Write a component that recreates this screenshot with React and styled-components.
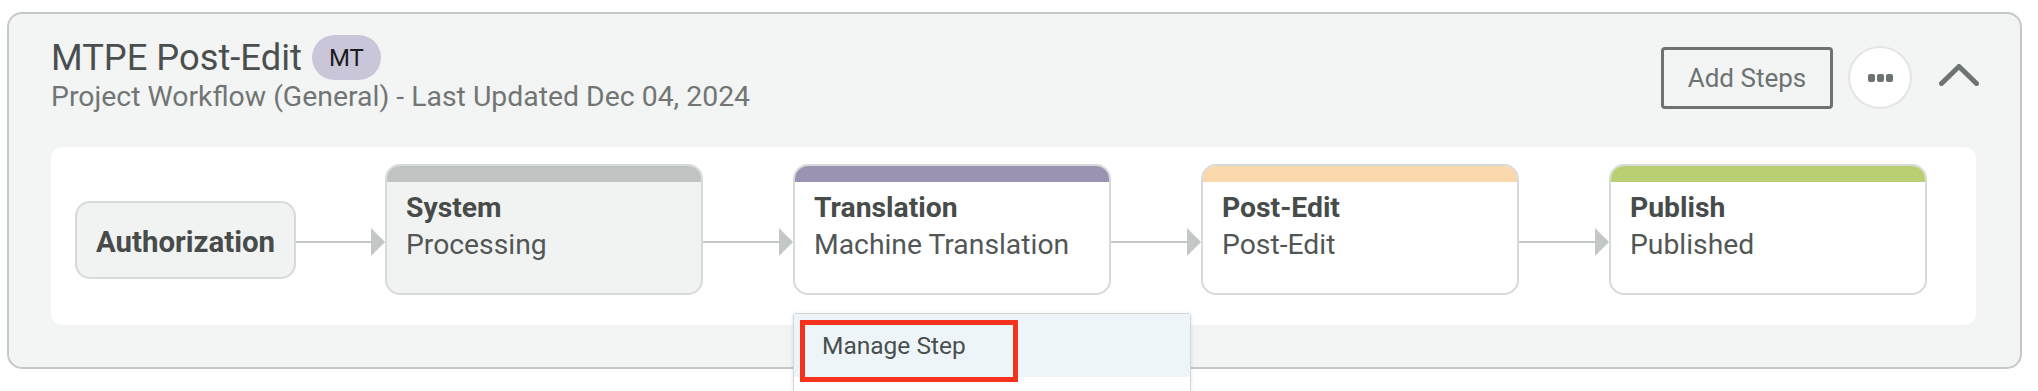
import React from "react";
import styled, { createGlobalStyle } from "styled-components";

const GlobalStyle = createGlobalStyle`
  html, body {
    margin: 0;
    padding: 0;
    background: #ffffff;
    overflow: hidden;
  }
  body {
    font-family: Roboto, "Liberation Sans", Arial, sans-serif;
  }
  * { box-sizing: border-box; }
`;

const Page = styled.div`
  min-height: 391px;
  padding: 12px 16px 0 7px;
`;

const Card = styled.section`
  background: #f3f4f4;
  border: 2px solid #c5cac9;
  border-radius: 15px;
  padding: 21px 44px 42px 42px;
`;

const Header = styled.div`
  display: flex;
  justify-content: space-between;
  align-items: flex-start;
`;

const TitleBlock = styled.div`
  display: flex;
  flex-direction: column;
`;

const TitleRow = styled.div`
  display: flex;
  align-items: center;
  gap: 10px;
  height: 45px;
`;

const Title = styled.h1`
  margin: 0;
  font-size: 36.3px;
  font-weight: 400;
  line-height: 45px;
  color: #4a4f4e;
`;

const Badge = styled.span`
  display: inline-flex;
  align-items: center;
  justify-content: center;
  height: 45px;
  width: 69px;
  border-radius: 23px;
  background: #c9c6d9;
  color: #1c1c1c;
  font-size: 24px;
`;

const Subtitle = styled.div`
  margin-top: 1px;
  font-size: 28.4px;
  line-height: 32px;
  color: #717675;
`;

const Actions = styled.div`
  display: flex;
  align-items: center;
  margin-top: 11px;
`;

const AddButton = styled.button`
  width: 172px;
  height: 62px;
  border: 3px solid #6d7272;
  border-radius: 4px;
  background: transparent;
  color: #6d7272;
  font-family: inherit;
  font-size: 26px;
  padding: 0;
  cursor: pointer;
`;

const MoreButton = styled.button`
  margin-left: 15px;
  width: 64px;
  height: 63px;
  border-radius: 50%;
  border: 2px solid #e3e5e4;
  background: #ffffff;
  display: flex;
  align-items: center;
  justify-content: center;
  gap: 2px;
  padding: 0;
  cursor: pointer;
`;

const Dot = styled.span`
  width: 7px;
  height: 8px;
  border-radius: 2px;
  background: #6d7272;
`;

const Collapse = styled.button`
  margin-left: 27px;
  margin-right: -3px;
  margin-bottom: 6px;
  background: none;
  border: none;
  padding: 0;
  display: flex;
  cursor: pointer;
`;

const Panel = styled.div`
  margin-top: 34px;
  background: #ffffff;
  border-radius: 12px;
  padding: 17px 24px 30px;
  display: flex;
  align-items: flex-start;
`;

const AuthNode = styled.div`
  margin-top: 37px;
  width: 221px;
  height: 78px;
  flex: none;
  border: 2px solid #d7dad9;
  border-radius: 15px;
  background: #f1f3f2;
  display: flex;
  align-items: center;
  justify-content: center;
  padding-top: 4px;
  font-size: 29.4px;
  font-weight: 700;
  color: #474c4b;
`;

const Connector = styled.div`
  margin-top: 64px;
  width: ${(p) => p.$width}px;
  height: 28px;
  flex: none;
  display: flex;
  align-items: center;
`;

const Line = styled.div`
  flex: 1;
  height: 2px;
  background: #c3c8c7;
`;

const Arrow = styled.div`
  width: 0;
  height: 0;
  border-top: 14px solid transparent;
  border-bottom: 14px solid transparent;
  border-left: 14px solid #c3c8c7;
`;

const StepWrap = styled.div`
  position: relative;
  flex: none;
`;

const StepCard = styled.div`
  width: 318px;
  height: 131px;
  border: 2px solid #d7dad9;
  border-radius: 15px;
  overflow: hidden;
  background: ${(p) => (p.$muted ? "#f1f3f2" : "#ffffff")};
`;

const StepBar = styled.div`
  height: 16px;
  background: ${(p) => p.$color};
`;

const StepBody = styled.div`
  padding: 7px 18px 0 19px;
  font-size: 28.3px;
  line-height: 37px;
`;

const StepType = styled.div`
  font-weight: 700;
  color: #474c4b;
`;

const StepName = styled.div`
  color: #525756;
  white-space: nowrap;
`;

const Menu = styled.div`
  position: absolute;
  left: 0;
  top: 149px;
  width: 398px;
  height: 78px;
  background: #ffffff;
  border: 1px solid #d3d7d6;
  border-bottom: none;
  border-radius: 3px 3px 0 0;
  box-shadow: 0 1px 4px rgba(0, 0, 0, 0.12);
  z-index: 2;
`;

const MenuItem = styled.div`
  height: 63px;
  display: flex;
  align-items: center;
  padding-left: 28px;
  background: #eef5f8;
  font-size: 24.5px;
  color: #4a4f4e;
`;

const Highlight = styled.div`
  position: absolute;
  left: 6px;
  top: 6px;
  width: 218px;
  height: 62px;
  border: 5px solid #f5321e;
  pointer-events: none;
`;

const steps = [
  { type: "System", name: "Processing", color: "#c0c5c4", muted: true },
  { type: "Translation", name: "Machine Translation", color: "#9a93b1", menu: true },
  { type: "Post-Edit", name: "Post-Edit", color: "#f9d8ab" },
  { type: "Publish", name: "Published", color: "#b9cf71" },
];

export default function App() {
  return (
    <>
      <GlobalStyle />
      <Page>
        <Card>
          <Header>
            <TitleBlock>
              <TitleRow>
                <Title>MTPE Post-Edit</Title>
                <Badge>MT</Badge>
              </TitleRow>
              <Subtitle>Project Workflow (General) - Last Updated Dec 04, 2024</Subtitle>
            </TitleBlock>
            <Actions>
              <AddButton>Add Steps</AddButton>
              <MoreButton aria-label="More">
                <Dot />
                <Dot />
                <Dot />
              </MoreButton>
              <Collapse aria-label="Collapse">
                <svg width="40" height="22" viewBox="0 0 40 22" fill="none">
                  <polyline
                    points="2.5,19.5 20,2.5 37.5,19.5"
                    stroke="#6d7272"
                    strokeWidth="5"
                    strokeLinecap="round"
                    strokeLinejoin="round"
                  />
                </svg>
              </Collapse>
            </Actions>
          </Header>
          <Panel>
            <AuthNode>Authorization</AuthNode>
            {steps.map((s, i) => (
              <React.Fragment key={s.type}>
                <Connector $width={i === 0 ? 89 : 90}>
                  <Line />
                  <Arrow />
                </Connector>
                <StepWrap>
                  <StepCard $muted={s.muted}>
                    <StepBar $color={s.color} />
                    <StepBody>
                      <StepType>{s.type}</StepType>
                      <StepName>{s.name}</StepName>
                    </StepBody>
                  </StepCard>
                  {s.menu && (
                    <Menu>
                      <MenuItem>Manage Step</MenuItem>
                      <Highlight />
                    </Menu>
                  )}
                </StepWrap>
              </React.Fragment>
            ))}
          </Panel>
        </Card>
      </Page>
    </>
  );
}
